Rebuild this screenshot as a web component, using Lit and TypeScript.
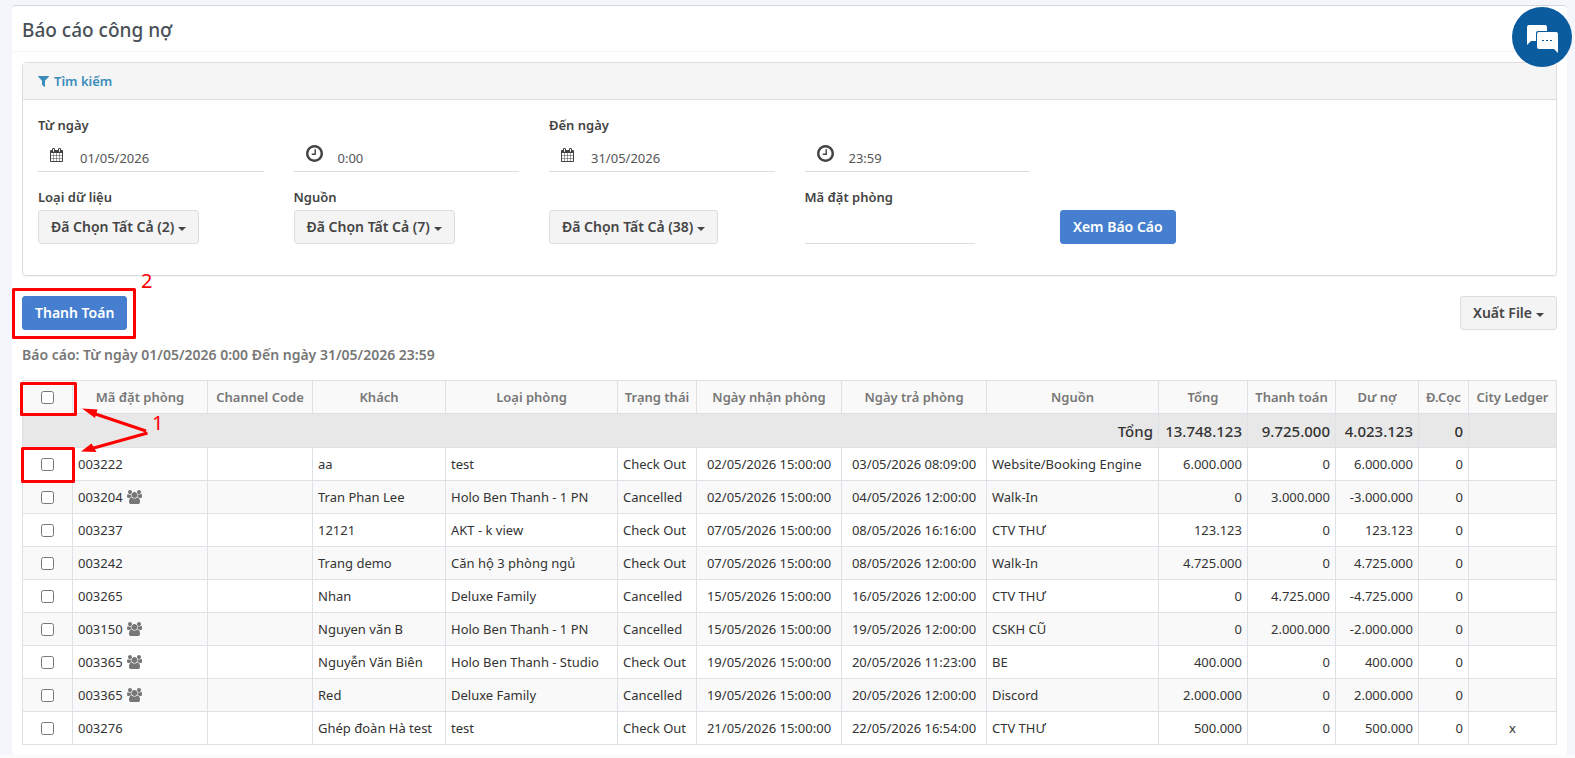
import { LitElement, html, css, svg, nothing } from "lit";
import { customElement, state } from "lit/decorators.js";

const ICONS = {
  filter: { box: "192 128 1408 1664", d: "M1595 295q17 41-14 70l-493 493v742q0 42-39 59-13 5-25 5-27 0-45-19l-256-256q-19-19-19-45v-486l-493-493q-31-29-14-70 17-39 59-39h1280q42 0 59 39z" },
  calendar: { box: "64 0 1664 1792", d: "M192 1664h288v-288h-288v288zm352 0h320v-288h-320v288zm-352-352h288v-320h-288v320zm352 0h320v-320h-320v320zm-352-384h288v-288h-288v288zm736 736h320v-288h-320v288zm-384-736h320v-288h-320v288zm768 736h288v-288h-288v288zm-384-352h320v-320h-320v320zm-352-864v-288q0-13-9.5-22.5t-22.5-9.5h-64q-13 0-22.5 9.5t-9.5 22.5v288q0 13 9.5 22.5t22.5 9.5h64q13 0 22.5-9.5t9.5-22.5zm736 864h288v-320h-288v320zm-384-384h320v-288h-320v288zm384 0h288v-288h-288v288zm32-480v-288q0-13-9.5-22.5t-22.5-9.5h-64q-13 0-22.5 9.5t-9.5 22.5v288q0 13 9.5 22.5t22.5 9.5h64q13 0 22.5-9.5t9.5-22.5zm384-64v1280q0 52-38 90t-90 38h-1408q-52 0-90-38t-38-90v-1280q0-52 38-90t90-38h128v-96q0-66 47-113t113-47h64q66 0 113 47t47 113v96h384v-96q0-66 47-113t113-47h64q66 0 113 47t47 113v96h128q52 0 90 38t38 90z" },
  clock: { box: "128 128 1536 1536", d: "M1024 544v448q0 14-9 23t-23 9h-320q-14 0-23-9t-9-23v-64q0-14 9-23t23-9h224v-352q0-14 9-23t23-9h64q14 0 23 9t9 23zm416 352q0-148-73-273t-198-198-273-73-273 73-198 198-73 273 73 273 198 198 273 73 273-73 198-198 73-273zm224 0q0 209-103 385.5t-279.5 279.5-385.5 103-385.5-103-279.5-279.5-103-385.5 103-385.5 279.5-279.5 385.5-103 385.5 103 279.5 279.5 103 385.5z" },
  group: { box: "64 0 1920 1792", d: "M657 896q-162 5-265 128h-134q-82 0-138-40.5t-56-118.5q0-353 124-353 6 0 43.5 21t97.5 42.5 119 21.5q67 0 133-23-5 37-5 66 0 159 90 293zm1071 637q0 120-73 189.5t-194 69.5h-874q-121 0-194-69.5t-73-189.5q0-53 3.5-103.5t14-109 26.5-108.5 43-97.5 62-81 85.5-53.5 111.5-20q10 0 43 21.5t73 48 107 48 135 21.5 135-21.5 107-48 73-48 43-21.5q61 0 111.5 20t85.5 53.5 62 81 43 97.5 26.5 108.5 14 109 3.5 103.5zm-1024-1277q0 106-75 181t-181 75-181-75-75-181 75-181 181-75 181 75 75 181zm704 384q0 159-112.5 271.5t-271.5 112.5-271.5-112.5-112.5-271.5 112.5-271.5 271.5-112.5 271.5 112.5 112.5 271.5zm576 225q0 78-56 118.5t-138 40.5h-134q-103-123-265-128 90-134 90-293 0-29-5-66 66 23 133 23 59 0 119-21.5t97.5-42.5 43.5-21q124 0 124 353zm-128-609q0 106-75 181t-181 75-181-75-75-181 75-181 181-75 181 75 75 181z" },
};

function icon(name: keyof typeof ICONS) {
  const i = ICONS[name];
  return html`<svg class="icon icon-${name}" viewBox=${i.box} aria-hidden="true">${svg`<path d=${i.d} />`}</svg>`;
}

interface Booking {
  code: string;
  group?: boolean;
  guest: string;
  room: string;
  status: string;
  checkIn: string;
  checkOut: string;
  source: string;
  total: string;
  paid: string;
  due: string;
  ledger?: string;
}

const BOOKINGS: Booking[] = [
  { code: "003222", guest: "aa", room: "test", status: "Check Out", checkIn: "02/05/2026 15:00:00", checkOut: "03/05/2026 08:09:00", source: "Website/Booking Engine", total: "6.000.000", paid: "0", due: "6.000.000" },
  { code: "003204", group: true, guest: "Tran Phan Lee", room: "Holo Ben Thanh - 1 PN", status: "Cancelled", checkIn: "02/05/2026 15:00:00", checkOut: "04/05/2026 12:00:00", source: "Walk-In", total: "0", paid: "3.000.000", due: "-3.000.000" },
  { code: "003237", guest: "12121", room: "AKT - k view", status: "Check Out", checkIn: "07/05/2026 15:00:00", checkOut: "08/05/2026 16:16:00", source: "CTV THƯ", total: "123.123", paid: "0", due: "123.123" },
  { code: "003242", guest: "Trang demo", room: "Căn hộ 3 phòng ngủ", status: "Check Out", checkIn: "07/05/2026 15:00:00", checkOut: "08/05/2026 12:00:00", source: "Walk-In", total: "4.725.000", paid: "0", due: "4.725.000" },
  { code: "003265", guest: "Nhan", room: "Deluxe Family", status: "Cancelled", checkIn: "15/05/2026 15:00:00", checkOut: "16/05/2026 12:00:00", source: "CTV THƯ", total: "0", paid: "4.725.000", due: "-4.725.000" },
  { code: "003150", group: true, guest: "Nguyen văn B", room: "Holo Ben Thanh - 1 PN", status: "Cancelled", checkIn: "15/05/2026 15:00:00", checkOut: "19/05/2026 12:00:00", source: "CSKH CŨ", total: "0", paid: "2.000.000", due: "-2.000.000" },
  { code: "003365", group: true, guest: "Nguyễn Văn Biên", room: "Holo Ben Thanh - Studio", status: "Check Out", checkIn: "19/05/2026 15:00:00", checkOut: "20/05/2026 11:23:00", source: "BE", total: "400.000", paid: "0", due: "400.000" },
  { code: "003365", group: true, guest: "Red", room: "Deluxe Family", status: "Cancelled", checkIn: "19/05/2026 15:00:00", checkOut: "20/05/2026 12:00:00", source: "Discord", total: "2.000.000", paid: "0", due: "2.000.000" },
  { code: "003276", guest: "Ghép đoàn Hà test", room: "test", status: "Check Out", checkIn: "21/05/2026 15:00:00", checkOut: "22/05/2026 16:54:00", source: "CTV THƯ", total: "500.000", paid: "0", due: "500.000", ledger: "x" },
];

const COLUMNS: { label: string; width: number }[] = [
  { label: "", width: 50 },
  { label: "Mã đặt phòng", width: 135 },
  { label: "Channel Code", width: 105 },
  { label: "Khách", width: 133 },
  { label: "Loại phòng", width: 172 },
  { label: "Trạng thái", width: 79 },
  { label: "Ngày nhận phòng", width: 145 },
  { label: "Ngày trả phòng", width: 145 },
  { label: "Nguồn", width: 172 },
  { label: "Tổng", width: 89 },
  { label: "Thanh toán", width: 88 },
  { label: "Dư nợ", width: 83 },
  { label: "Đ.Cọc", width: 50 },
  { label: "City Ledger", width: 88 },
];

@customElement("app-root")
export class AppRoot extends LitElement {
  @state() private selected = new Set<number>();

  static styles = css`
    :host {
      display: block;
      position: relative;
      box-sizing: border-box;
      min-height: 100vh;
      padding: 5px 8px 3px 12px;
      background: linear-gradient(#fbfbfb, #fbfbfb) bottom / 100% 3px no-repeat #f5f6fb;
      font-family: "Noto Sans", "Open Sans", sans-serif;
      font-size: 13px;
      line-height: 20px;
      color: #333;
    }
    *, *::before, *::after { box-sizing: border-box; }
    button, input { font: inherit; color: inherit; }
    .icon { display: block; fill: currentColor; flex: none; }
    .card {
      position: relative;
      background: #fff;
      border-top: 1px solid #d2d6e2;
      border-radius: 4px;
    }
    .title {
      margin: 0;
      padding: 12px 10px 8px;
      border-bottom: 1px solid #f4f4f4;
      font-size: 19px;
      line-height: 25px;
      font-weight: 500;
      color: #495057;
    }
    .content { padding: 10px; }
    .panel {
      border: 1px solid #ddd;
      border-radius: 4px;
      box-shadow: 0 1px 1px rgba(0, 0, 0, 0.05);
    }
    .panel-head {
      display: flex;
      align-items: center;
      height: 37px;
      padding: 0 15px;
      border-bottom: 1px solid #ddd;
      background: #f5f5f5;
    }
    .panel-head a {
      display: flex;
      align-items: center;
      gap: 5px;
      color: #3c8dbc;
      font-weight: 600;
      text-decoration: none;
    }
    .icon-filter { width: 11px; height: 13px; }
    .form {
      display: grid;
      grid-template-columns: repeat(6, minmax(0, 1fr));
      column-gap: 30px;
      row-gap: 13px;
      padding: 13px 15px 31px;
    }
    .field { display: flex; flex-direction: column; align-items: flex-start; justify-content: flex-end; }
    .field label, .field .label { font-weight: 600; line-height: 25px; color: #444; }
    .entry {
      display: flex;
      align-items: flex-start;
      width: 100%;
      height: 34px;
      padding-left: 12px;
      border-bottom: 1px solid #ddd;
      color: #555;
    }
    .entry input {
      width: 100%;
      min-width: 0;
      height: 33px;
      padding: 6px 0 0;
      border: 0;
      outline: 0;
      background: none;
    }
    .entry .icon { color: #444; }
    .icon-calendar { width: 13px; height: 14px; margin: 10px 17px 0 0; }
    .icon-clock { width: 17px; height: 17px; margin: 7px 15px 0 0; }
    .plain {
      width: 170px;
      max-width: 100%;
      height: 34px;
      border: 0;
      border-bottom: 1px solid #ddd;
      outline: 0;
      background: none;
    }
    .btn {
      display: inline-flex;
      align-items: center;
      gap: 4px;
      height: 34px;
      padding: 0 12px;
      border: 1px solid #ddd;
      border-radius: 3px;
      background: #f4f4f4;
      color: #444;
      font-size: 14px;
      font-weight: 600;
      white-space: nowrap;
      cursor: pointer;
    }
    .btn.primary { border-color: #467fcf; background: #467fcf; color: #fff; }
    .caret { margin-top: 3px; border: 4px solid transparent; border-top-color: currentColor; border-bottom: 0; }
    .toolbar { display: flex; justify-content: space-between; margin: 20px 0 15px; }
    .summary { margin: 0 0 15px; font-size: 14px; font-weight: 600; color: #777; }
    .report { width: 100%; table-layout: fixed; border-collapse: collapse; }
    .report th, .report td {
      height: 33px;
      padding: 0 5px;
      border: 1px solid #dee2e6;
      font-weight: 400;
      text-align: left;
      white-space: nowrap;
    }
    .report thead th { background: #f9f9f9; color: #777; font-weight: 600; text-align: center; }
    .report tbody tr:nth-child(even) td { background: #f9f9f9; }
    .report .center { text-align: center; }
    .report .num { text-align: right; }
    .report tbody .sum th, .report tbody .sum td {
      height: 34px;
      background: #e8e8e8;
      font-size: 15px;
      font-weight: 500;
      text-align: right;
    }
    .report input { display: block; width: 13px; height: 13px; margin: 0 auto; }
    .code { display: flex; align-items: center; gap: 4px; }
    .icon-group { width: 15px; height: 14px; color: #777; }
    .marks {
      position: absolute;
      top: 0;
      left: 0;
      width: 200px;
      height: 490px;
      pointer-events: none;
    }
    .marks .line { fill: none; stroke: #f00; stroke-width: 3; stroke-linejoin: round; }
    .marks .head { fill: #f00; }
    .marks text { fill: #f00; font-size: 20px; }
    .chat {
      position: absolute;
      top: 7px;
      right: 3px;
      width: 60px;
      height: 60px;
      padding: 0;
      border: 0;
      border-radius: 50%;
      background: #0b5c9e;
      cursor: pointer;
    }
    .chat svg { display: block; width: 60px; height: 60px; }
  `;

  private toggle(i: number) {
    const next = new Set(this.selected);
    next.has(i) ? next.delete(i) : next.add(i);
    this.selected = next;
  }

  private toggleAll(e: Event) {
    this.selected = (e.target as HTMLInputElement).checked ? new Set(BOOKINGS.keys()) : new Set();
  }

  private dropdown(text: string) {
    return html`<button class="btn" type="button">${text}<span class="caret"></span></button>`;
  }

  private renderFilters() {
    return html`
      <form class="form" @submit=${(e: Event) => e.preventDefault()}>
        <div class="field">
          <label for="from">Từ ngày</label>
          <div class="entry">${icon("calendar")}<input id="from" value="01/05/2026" /></div>
        </div>
        <div class="field">
          <div class="entry">${icon("clock")}<input aria-label="Giờ bắt đầu" value="0:00" /></div>
        </div>
        <div class="field">
          <label for="to">Đến ngày</label>
          <div class="entry">${icon("calendar")}<input id="to" value="31/05/2026" /></div>
        </div>
        <div class="field">
          <div class="entry">${icon("clock")}<input aria-label="Giờ kết thúc" value="23:59" /></div>
        </div>
        <div></div>
        <div></div>
        <div class="field"><span class="label">Loại dữ liệu</span>${this.dropdown("Đã Chọn Tất Cả (2)")}</div>
        <div class="field"><span class="label">Nguồn</span>${this.dropdown("Đã Chọn Tất Cả (7)")}</div>
        <div class="field">${this.dropdown("Đã Chọn Tất Cả (38)")}</div>
        <div class="field">
          <label for="booking">Mã đặt phòng</label>
          <input class="plain" id="booking" />
        </div>
        <div class="field"><button class="btn primary" type="submit">Xem Báo Cáo</button></div>
      </form>
    `;
  }

  private renderTable() {
    return html`
      <table class="report">
        <colgroup>${COLUMNS.map((c) => html`<col style="width:${c.width}px" />`)}</colgroup>
        <thead>
          <tr>
            ${COLUMNS.map((c, i) => html`<th scope="col">${i === 0
              ? html`<input type="checkbox" aria-label="Chọn tất cả" .checked=${this.selected.size === BOOKINGS.length} @change=${this.toggleAll} />`
              : c.label}</th>`)}
          </tr>
        </thead>
        <tbody>
          <tr class="sum">
            <th scope="row" colspan="9">Tổng</th>
            <td>13.748.123</td>
            <td>9.725.000</td>
            <td>4.023.123</td>
            <td>0</td>
            <td></td>
          </tr>
        </tbody>
        <tbody>
          ${BOOKINGS.map((b, i) => html`
            <tr>
              <td><input type="checkbox" aria-label="Chọn ${b.code}" .checked=${this.selected.has(i)} @change=${() => this.toggle(i)} /></td>
              <td><span class="code">${b.code}${b.group ? icon("group") : nothing}</span></td>
              <td></td>
              <td>${b.guest}</td>
              <td>${b.room}</td>
              <td>${b.status}</td>
              <td class="center">${b.checkIn}</td>
              <td class="center">${b.checkOut}</td>
              <td>${b.source}</td>
              <td class="num">${b.total}</td>
              <td class="num">${b.paid}</td>
              <td class="num">${b.due}</td>
              <td class="num">0</td>
              <td class="center">${b.ledger ?? ""}</td>
            </tr>`)}
        </tbody>
      </table>
    `;
  }

  render() {
    return html`
      <main class="card">
        <h1 class="title">Báo cáo công nợ</h1>
        <div class="content">
          <section class="panel">
            <div class="panel-head"><a href="#search">${icon("filter")}Tìm kiếm</a></div>
            ${this.renderFilters()}
          </section>
          <div class="toolbar">
            <button class="btn primary" type="button">Thanh Toán</button>
            ${this.dropdown("Xuất File")}
          </div>
          <p class="summary">Báo cáo: Từ ngày 01/05/2026 0:00 Đến ngày 31/05/2026 23:59</p>
          ${this.renderTable()}
        </div>
      </main>
      <svg class="marks" viewBox="0 0 200 490">
        <rect class="line" x="13.5" y="289.5" width="121" height="48" />
        <rect class="line" x="21.5" y="383.5" width="54" height="31" />
        <rect class="line" x="22.5" y="448.5" width="51" height="33" />
        <path class="line" d="M146 431 94 413.500M147.500 433 92 448.500" />
        <path class="head" d="M82 408.500 97.500 409.500 95 418zM81 451.500 91.500 443.500 96.500 452z" />
        <text x="141" y="288">2</text>
        <text x="152" y="430">1</text>
      </svg>
      <button class="chat" type="button" aria-label="Chat">
        <svg viewBox="0 0 60 60" aria-hidden="true">
          <path fill="#fff" d="M17 18h16q2 0 2 2v4h-9q-2 0-2 2v8h-5l-4 4v-18q0-2 2-2z" />
          <path fill="#fff" d="M27 25h17q2 0 2 2v19l-4-4h-15q-2 0-2-2v-13q0-2 2-2z" />
          <path fill="#0b5c9e" d="M30 33h2v1h-2zM34 33h2v1h-2zM38 33h2v1h-2z" />
        </svg>
      </button>
    `;
  }
}
